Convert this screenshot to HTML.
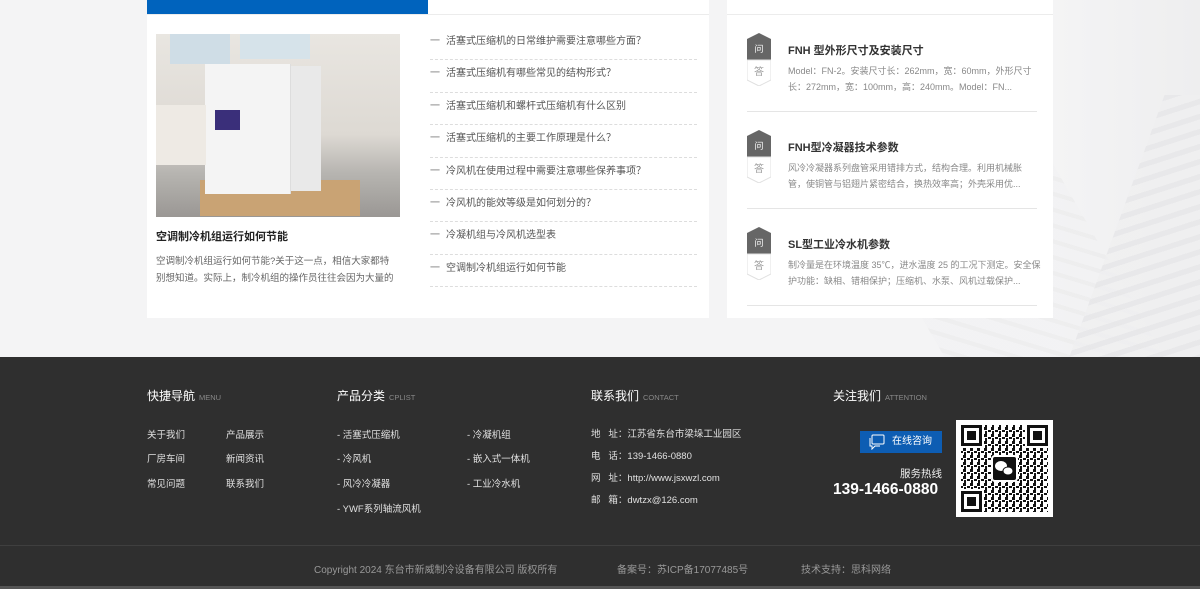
<!DOCTYPE html>
<html><head><meta charset="utf-8"><style>
*{margin:0;padding:0;box-sizing:border-box}
body{width:1200px;height:589px;overflow:hidden;background:#f4f4f5;font-family:"Liberation Sans","Noto Sans CJK SC",sans-serif;position:relative}
.a{position:absolute}
.top{height:357px;position:relative;overflow:hidden;background:linear-gradient(90deg,#f4f4f5 0,#f4f4f5 1050px,#eeeeef 1200px)}
.bld{position:absolute;left:1110px;top:95px;width:200px;height:300px;background:repeating-linear-gradient(160deg,#e6e6e8 0 6px,#efeff0 6px 16px);transform:skewX(-20deg);opacity:.8}
.bld2{position:absolute;left:900px;top:150px;width:220px;height:260px;background:repeating-linear-gradient(20deg,#ebebec 0 5px,#f2f2f3 5px 18px);transform:skewX(30deg);opacity:.7}
.panel{background:#fff}
.li{position:absolute;left:430px;width:267px;height:32.4px;border-bottom:1px dashed #ddd;font-size:10px;color:#555;line-height:16px;padding-top:6px}
.li span{display:inline-block;width:16px;color:#777}
.qa{position:absolute;left:747px;width:306px}
.badge{position:absolute;left:0;top:0;width:24px;height:54px}
.qt{position:absolute;left:41px;top:10px;font-size:11px;font-weight:bold;color:#333;white-space:nowrap}
.qd{position:absolute;left:41px;top:31px;width:250px;height:32px;overflow:hidden;font-size:9px;color:#888;line-height:16px}
.sep{position:absolute;left:0;top:79px;width:290px;border-top:1px solid #e5e5e5}
.foot{position:absolute;left:0;top:357px;width:1200px;height:232px;background:#2f2f2f;color:#ddd}
.h{position:absolute;top:30px;font-size:12px;color:#fff;white-space:nowrap}
.h small{font-size:7.5px;color:#888;margin-left:4px}
.fl{position:absolute;font-size:9.5px;color:#e0e0e0;white-space:nowrap}
</style></head><body>
<div class="top">
<div class="bld2"></div><div class="bld"></div>
<div class="a panel" style="left:147px;top:0;width:562px;height:318px"></div>
<div class="a" style="left:147px;top:0;width:281px;height:14px;background:#0063bd"></div>
<div class="a" style="left:147px;top:14px;width:562px;height:1px;background:#ececec"></div>
<div class="a" style="left:156px;top:34px;width:244px;height:183px;background:linear-gradient(180deg,#e9e6e1 0,#ddd9d3 55%,#b8b6b2 75%,#9a9794 100%)"></div>
<div class="a" style="left:170px;top:34px;width:60px;height:30px;background:#cfdde6"></div>
<div class="a" style="left:240px;top:34px;width:70px;height:25px;background:#d6e3ea"></div>
<div class="a" style="left:200px;top:180px;width:160px;height:36px;background:#c9a374"></div>
<div class="a" style="left:205px;top:64px;width:86px;height:130px;background:#f4f4f4;border-right:1px solid #ddd"></div>
<div class="a" style="left:291px;top:66px;width:30px;height:125px;background:#e9e9e9"></div>
<div class="a" style="left:156px;top:105px;width:50px;height:60px;background:#eeeae4"></div>
<div class="a" style="left:215px;top:110px;width:25px;height:20px;background:#3a2f7a"></div>
<div class="a" style="left:156px;top:228px;font-size:11px;color:#222;font-weight:bold">空调制冷机组运行如何节能</div>
<div class="a" style="left:156px;top:253px;width:242px;font-size:9.5px;color:#666;line-height:17px">空调制冷机组运行如何节能?关于这一点，相信大家都特别想知道。实际上，制冷机组的操作员往往会因为大量的</div>
<div class="li" style="top:28px"><span>一</span>活塞式压缩机的日常维护需要注意哪些方面？</div>
<div class="li" style="top:60.4px"><span>一</span>活塞式压缩机有哪些常见的结构形式？</div>
<div class="li" style="top:92.8px"><span>一</span>活塞式压缩机和螺杆式压缩机有什么区别</div>
<div class="li" style="top:125.2px"><span>一</span>活塞式压缩机的主要工作原理是什么？</div>
<div class="li" style="top:157.6px"><span>一</span>冷风机在使用过程中需要注意哪些保养事项？</div>
<div class="li" style="top:190px"><span>一</span>冷风机的能效等级是如何划分的？</div>
<div class="li" style="top:222.4px"><span>一</span>冷凝机组与冷风机选型表</div>
<div class="li" style="top:254.8px"><span>一</span>空调制冷机组运行如何节能</div>

<div class="a panel" style="left:727px;top:0;width:326px;height:318px"></div>
<div class="a" style="left:727px;top:14px;width:326px;height:1px;background:#ececec"></div>
<div class="qa" style="top:32px"><svg class="badge" viewBox="0 0 24 54"><path d="M0 7 L12 1 L24 7 V28 H0Z" fill="#666"/><path d="M0 28 H24 V48 L12 54 L0 48Z" fill="#fff" stroke="#e0e0e0"/><text x="12" y="20" font-size="9" fill="#fff" text-anchor="middle" font-family="Noto Sans CJK SC">问</text><text x="12" y="43" font-size="10" fill="#999" text-anchor="middle" font-family="Noto Sans CJK SC">答</text></svg><div class="qt">FNH 型外形尺寸及安装尺寸</div><div class="qd">Model：FN-2。安装尺寸长：262mm，宽：60mm，外形尺寸长：272mm，宽：100mm，高：240mm。Model：FN...</div><div class="sep"></div></div>
<div class="qa" style="top:129px"><svg class="badge" viewBox="0 0 24 54"><path d="M0 7 L12 1 L24 7 V28 H0Z" fill="#666"/><path d="M0 28 H24 V48 L12 54 L0 48Z" fill="#fff" stroke="#e0e0e0"/><text x="12" y="20" font-size="9" fill="#fff" text-anchor="middle" font-family="Noto Sans CJK SC">问</text><text x="12" y="43" font-size="10" fill="#999" text-anchor="middle" font-family="Noto Sans CJK SC">答</text></svg><div class="qt">FNH型冷凝器技术参数</div><div class="qd">风冷冷凝器系列盘管采用错排方式，结构合理。利用机械胀管，使铜管与铝翅片紧密结合，换热效率高；外壳采用优...</div><div class="sep"></div></div>
<div class="qa" style="top:226px"><svg class="badge" viewBox="0 0 24 54"><path d="M0 7 L12 1 L24 7 V28 H0Z" fill="#666"/><path d="M0 28 H24 V48 L12 54 L0 48Z" fill="#fff" stroke="#e0e0e0"/><text x="12" y="20" font-size="9" fill="#fff" text-anchor="middle" font-family="Noto Sans CJK SC">问</text><text x="12" y="43" font-size="10" fill="#999" text-anchor="middle" font-family="Noto Sans CJK SC">答</text></svg><div class="qt">SL型工业冷水机参数</div><div class="qd" style="width:256px">制冷量是在环境温度 35℃，进水温度 25 的工况下测定。安全保护功能：缺相、错相保护；压缩机、水泵、风机过载保护...</div><div class="sep"></div></div>
</div>

<div class="foot">
<div class="h" style="left:147px">快捷导航<small>MENU</small></div>
<div class="h" style="left:337px">产品分类<small>CPLIST</small></div>
<div class="h" style="left:591px">联系我们<small>CONTACT</small></div>
<div class="h" style="left:833px">关注我们<small>ATTENTION</small></div>
<div class="fl" style="left:147px;top:70px">关于我们</div><div class="fl" style="left:226px;top:70px">产品展示</div>
<div class="fl" style="left:147px;top:94px">厂房车间</div><div class="fl" style="left:226px;top:94px">新闻资讯</div>
<div class="fl" style="left:147px;top:119px">常见问题</div><div class="fl" style="left:226px;top:119px">联系我们</div>
<div class="fl" style="left:337px;top:70px">- 活塞式压缩机</div><div class="fl" style="left:467px;top:70px">- 冷凝机组</div>
<div class="fl" style="left:337px;top:94px">- 冷风机</div><div class="fl" style="left:467px;top:94px">- 嵌入式一体机</div>
<div class="fl" style="left:337px;top:119px">- 风冷冷凝器</div><div class="fl" style="left:467px;top:119px">- 工业冷水机</div>
<div class="fl" style="left:337px;top:144px">- YWF系列轴流风机</div>
<div class="fl" style="left:591px;top:69px">地&nbsp;&nbsp;&nbsp;址：江苏省东台市梁垛工业园区</div>
<div class="fl" style="left:591px;top:91px">电&nbsp;&nbsp;&nbsp;话：139-1466-0880</div>
<div class="fl" style="left:591px;top:113px">网&nbsp;&nbsp;&nbsp;址：http://www.jsxwzl.com</div>
<div class="fl" style="left:591px;top:135px">邮&nbsp;&nbsp;&nbsp;箱：dwtzx@126.com</div>
<div class="a" style="left:860px;top:74px;width:82px;height:22px;background:#0d5db3;color:#fff;font-size:10px;line-height:22px;padding-left:32px">在线咨询
<svg class="a" style="left:8px;top:3px" width="18" height="16" viewBox="0 0 18 16"><rect x="4" y="1" width="12" height="9" rx="1" fill="none" stroke="#fff"/><path d="M2 4 V12 H4 V15 L7 12 H12" fill="none" stroke="#fff"/></svg></div>
<div class="a" style="left:900px;top:109px;font-size:10.5px;color:#eee">服务热线</div>
<div class="a" style="left:833px;top:124px;font-size:15.5px;font-weight:bold;color:#fff">139-1466-0880</div>
<svg class="a" style="left:956px;top:63px" width="97" height="97" viewBox="0 0 97 97">
<defs><pattern id="p" width="7" height="7" patternUnits="userSpaceOnUse"><rect width="7" height="7" fill="#fff"/><rect x="0" y="0" width="3" height="3" fill="#111"/><rect x="4" y="3" width="3" height="2" fill="#111"/><rect x="1" y="4" width="2" height="3" fill="#111"/></pattern></defs>
<rect width="97" height="97" fill="#fff"/><rect x="5" y="5" width="87" height="87" fill="url(#p)"/>
<g fill="#fff"><rect x="4" y="4" width="24" height="24"/><rect x="69" y="4" width="24" height="24"/><rect x="4" y="69" width="24" height="24"/></g>
<g fill="none" stroke="#111" stroke-width="3"><rect x="6.5" y="6.5" width="18" height="18"/><rect x="72.5" y="6.5" width="18" height="18"/><rect x="6.5" y="72.5" width="18" height="18"/></g>
<g fill="#111"><rect x="11" y="11" width="9" height="9"/><rect x="77" y="11" width="9" height="9"/><rect x="11" y="77" width="9" height="9"/></g>
<rect x="36" y="36" width="25" height="25" rx="3" fill="#111" stroke="#fff" stroke-width="2"/>
<ellipse cx="45" cy="46" rx="6" ry="5" fill="#fff"/><ellipse cx="52" cy="51" rx="5" ry="4" fill="#fff" stroke="#111"/>
</svg>
<div class="a" style="left:0;top:188px;width:1200px;height:1px;background:#3f3f3f"></div>
<div class="a" style="left:314px;top:204px;font-size:10px;color:#999">Copyright 2024 东台市新威制冷设备有限公司 版权所有</div>
<div class="a" style="left:617px;top:204px;font-size:10px;color:#999">备案号：苏ICP备17077485号</div>
<div class="a" style="left:801px;top:204px;font-size:10px;color:#999">技术支持：思科网络</div>
<div class="a" style="left:0;top:229px;width:1200px;height:3px;background:#555"></div>
</div>
</body></html>
